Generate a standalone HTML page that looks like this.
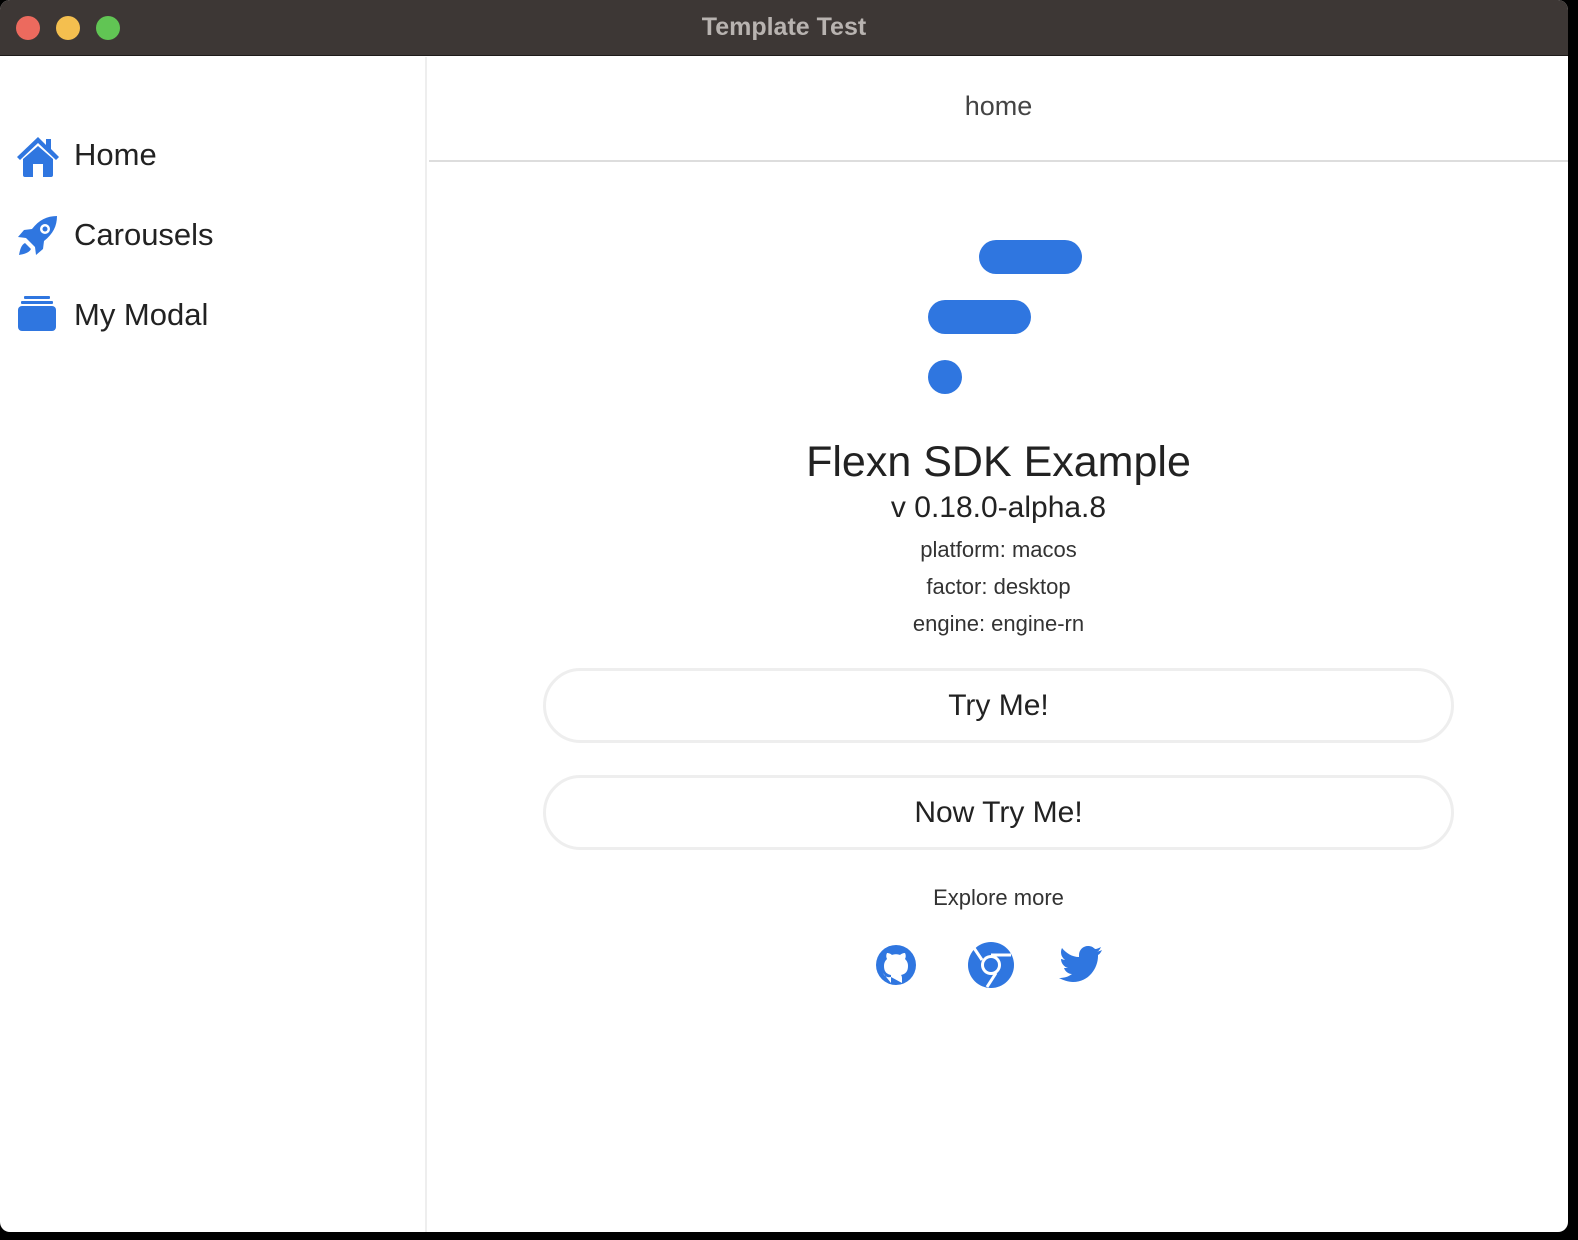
<!DOCTYPE html>
<html><head><meta charset="utf-8"><style>
*{margin:0;padding:0;box-sizing:border-box}
body{width:1578px;height:1240px;background:#000;font-family:"Liberation Sans",sans-serif;overflow:hidden;position:relative}
.win{position:absolute;left:0;top:0;width:1568px;height:1232px;border-radius:10px;overflow:hidden;background:#fff}
.tb{position:absolute;left:0;top:0;width:100%;height:56px;background:#3d3735;border-bottom:1px solid #1e1b1a}
.tb .t{position:absolute;left:0;right:0;top:13px;text-align:center;color:#b8b3b0;font-weight:bold;font-size:25px}
.dot{position:absolute;top:16px;width:24px;height:24px;border-radius:50%}
.side{position:absolute;left:0;top:57px;width:427px;bottom:0;border-right:2px solid #eee}
.item{position:absolute;left:74px;font-size:31px;color:#222}
.hdr{position:absolute;left:429px;right:0;top:57px;height:105px;border-bottom:2px solid #ddd;text-align:center;font-size:27px;color:#444;padding-top:34px}
.c{position:absolute;left:429px;right:0;text-align:center;color:#222}
.b{position:absolute;background:#2f76e0;border-radius:17px}
.btn{position:absolute;left:543px;width:911px;height:75px;border:3px solid #eee;border-radius:38px;text-align:center;font-size:30px;line-height:69px;color:#222}
</style></head><body><div class="win">
<div class="tb"><div class="dot" style="left:16px;background:#ec6a5e"></div><div class="dot" style="left:56px;background:#f4bf4f"></div><div class="dot" style="left:96px;background:#61c554"></div><div class="t">Template Test</div></div>
<div class="side">
<svg style="position:absolute;left:16px;top:78px" width="44" height="42" viewBox="0 0 44 42"><path d="M22 2 L1 22 L4 25 L22 8 L40 25 L43 22 L35 14 L35 4 L30 4 L30 10 Z" fill="#2f76e0"/><path d="M7 24 L22 11 L37 24 L37 40 Q37 42 35 42 L27 42 L27 29 L17 29 L17 42 L9 42 Q7 42 7 40Z" fill="#2f76e0"/></svg>
<div class="item" style="top:80px">Home</div>
<svg style="position:absolute;left:17px;top:158px" width="42" height="42" viewBox="0 0 42 42"><path d="M40 1 C30 1 22 5 15 14 L7 15 L1 22 L9 23 L18 32 L19 40 L26 34 L27 26 C36 19 40 11 40 1Z" fill="#2f76e0"/><circle cx="28" cy="14" r="5" fill="#fff"/><circle cx="28" cy="14" r="2.5" fill="#2f76e0"/><path d="M8 28 C4 30 3 35 2 40 C7 39 12 38 14 34Z" fill="#2f76e0"/></svg>
<div class="item" style="top:160px">Carousels</div>
<svg style="position:absolute;left:17px;top:239px" width="40" height="36" viewBox="0 0 40 36"><rect x="7" y="0" width="26" height="3" rx="1" fill="#2f76e0"/><rect x="4" y="5" width="32" height="3" rx="1" fill="#2f76e0"/><rect x="1" y="10" width="38" height="25" rx="4" fill="#2f76e0"/></svg>
<div class="item" style="top:240px">My Modal</div>
</div>
<div class="hdr">home</div>
<div class="b" style="left:979px;top:240px;width:103px;height:34px"></div>
<div class="b" style="left:928px;top:300px;width:103px;height:34px"></div>
<div class="b" style="left:928px;top:360px;width:34px;height:34px"></div>
<div class="c" style="top:438px;font-size:43px">Flexn SDK Example</div>
<div class="c" style="top:491px;font-size:30px">v 0.18.0-alpha.8</div>
<div class="c" style="top:537px;font-size:22px;color:#333">platform: macos</div>
<div class="c" style="top:574px;font-size:22px;color:#333">factor: desktop</div>
<div class="c" style="top:611px;font-size:22px;color:#333">engine: engine-rn</div>
<div class="btn" style="top:668px">Try Me!</div>
<div class="btn" style="top:775px">Now Try Me!</div>
<div class="c" style="top:885px;font-size:22px;color:#333">Explore more</div>
<svg style="position:absolute;left:875px;top:944px" width="42" height="42" viewBox="0 0 42 42"><circle cx="21" cy="21" r="20" fill="#2f76e0"/><path d="M16 39 L16 33 C11 34 9 31 8 29 M16 33 L16 31 C11 30 9 27 9 22 C9 19 10 17 12 15 C11 13 11 11 12 9 C14 9 16 10 17 11 C19 10 23 10 25 11 C26 10 28 9 30 9 C31 11 31 13 30 15 C32 17 33 19 33 22 C33 27 31 30 26 31 C27 32 27 34 27 35 L27 39 Z" fill="#fff"/></svg>
<svg style="position:absolute;left:967px;top:941px" width="48" height="48" viewBox="0 0 48 48"><circle cx="24" cy="24" r="23" fill="#2f76e0"/><circle cx="24" cy="24" r="10" fill="#fff"/><circle cx="24" cy="24" r="7" fill="#2f76e0"/><path d="M24 14 L44 14" stroke="#fff" stroke-width="3"/><path d="M15 19 L7 7" stroke="#fff" stroke-width="3"/><path d="M29 32 L20 46" stroke="#fff" stroke-width="3"/></svg>
<svg style="position:absolute;left:1059px;top:946px" width="44" height="36" viewBox="0 0 44 36"><path d="M43 4 C41 5 40 5 38 6 C40 5 41 3 42 1 C40 2 38 3 36 3 C34 1 32 0 29 0 C24 0 20 4 20 9 C20 10 20 10 20 11 C13 11 7 7 3 2 C1 6 2 11 6 14 C5 14 3 13 2 13 C2 17 5 21 9 22 C7 22 6 22 5 22 C6 25 9 28 13 28 C9 31 5 32 0 32 C4 34 9 36 14 36 C30 36 39 22 39 10 L39 9 C41 8 42 6 43 4Z" fill="#2f76e0"/></svg>
</div></body></html>
